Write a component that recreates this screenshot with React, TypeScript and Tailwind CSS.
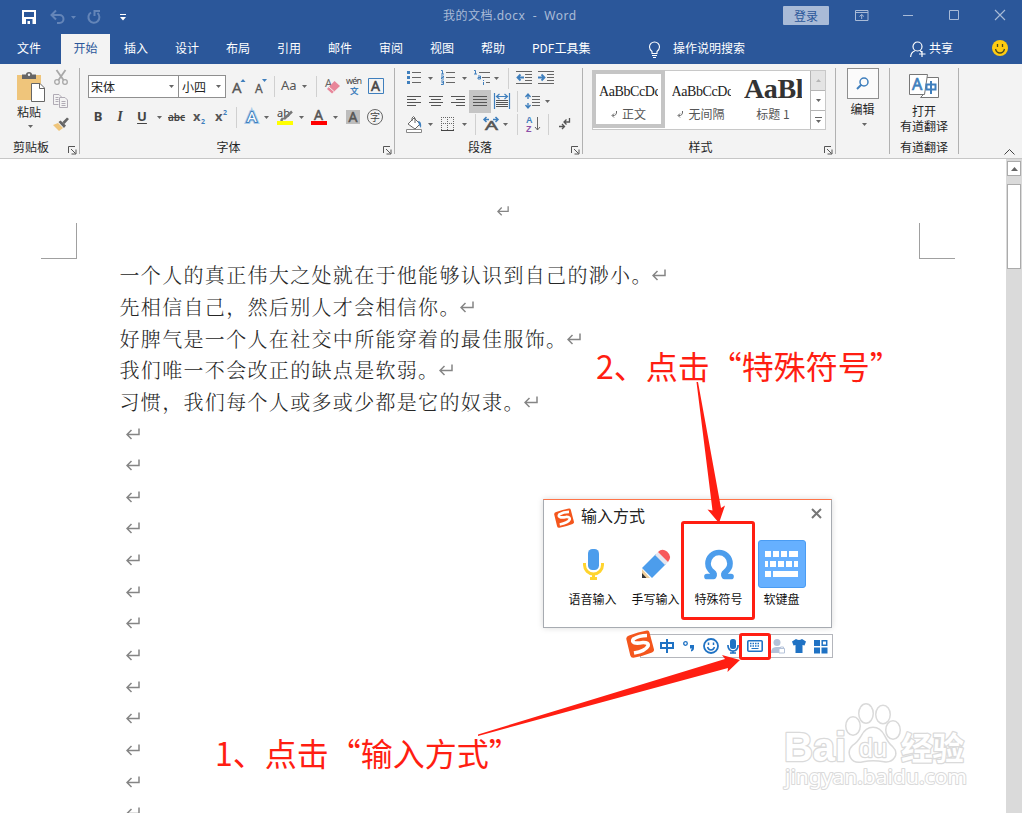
import React from 'react';
import { clsx } from 'clsx';

type IconProps = { w: number; h: number; className?: string; children: React.ReactNode };

function Icon({ w, h, className, children }: IconProps) {
  return (
    <svg width={w} height={h} viewBox={`0 0 ${w} ${h}`} fill="none" className={clsx('shrink-0 overflow-visible', className)}>
      {children}
    </svg>
  );
}

function Caret({ className }: { className?: string }) {
  return (
    <Icon w={5} h={3} className={clsx('text-[#666]', className)}>
      <path d="M0 0h5L2.5 3z" fill="currentColor" />
    </Icon>
  );
}

function Sep({ className }: { className?: string }) {
  return <div className={clsx('h-[21px] w-px shrink-0 bg-[#d0d0d0]', className)} />;
}

function Launcher() {
  return (
    <Icon w={9} h={9} className="ml-[6px] mt-[7px]">
      <path d="M.5 7V.5H7M3 3l4.500 4.500M8 3.500V8H3.500" stroke="#555" />
    </Icon>
  );
}

type GroupProps = { label?: string; launcher?: boolean; className?: string; children: React.ReactNode };

function Group({ label, launcher, className, children }: GroupProps) {
  return (
    <section className={clsx('flex h-[86px] shrink-0 flex-col border-r border-[#b1b1b1]', className)}>
      <div className="h-[71px]">{children}</div>
      <div className="flex h-[15px] text-xs leading-4">
        <span className="flex-1 text-center">{label}</span>
        {launcher && <div className="w-[17px]"><Launcher /></div>}
      </div>
    </section>
  );
}

function Return({ className, size = 14 }: { className?: string; size?: number }) {
  return (
    <svg width={size} height={size} viewBox="0 0 14 14" fill="none" className={clsx('shrink-0', className)}>
      <path d="M13 1.500v6H1M5.500 3L1 7.500 5.500 12" stroke="#858585" strokeWidth="1.500" />
    </svg>
  );
}

function Sogou({ size }: { size: number }) {
  return (
    <svg width={size} height={size} viewBox="0 0 28 28" className="shrink-0">
      <path d="M3 5.500Q12 2 21 .6Q23 .3 23.500 2.500L28 19.500Q28.300 21.500 26 22.500Q16 26.500 7.500 27.700Q5 28 4.300 25.500L.300 9Q0 6.500 3 5.500z" fill="#f4561d" />
      <path d="M21 5.500Q13 5.500 7.500 9Q5.500 11.500 8.500 12.800Q11 13.700 17 12.500Q23 12.300 22 16Q19.500 21 8 23" stroke="#fff" strokeWidth="3.700" fill="none" />
    </svg>
  );
}

function TitleBar() {
  return (
    <header className="flex h-[34px] items-center text-[#a9bbd7]">
      <Icon w={14} h={14} className="ml-[22px]">
        <path d="M0 0h14v14H0zM2 2v5h10V2zM4 9v5h1.500v-3H8v3h2.500V9z" fill="#fff" fillRule="evenodd" />
      </Icon>
      <Icon w={15} h={14} className="ml-[14px] text-[#6485b8]">
        <path d="M1 5h8.500a4 4 0 0 1 0 8H7" stroke="currentColor" strokeWidth="2" />
        <path d="M6 .5L1.500 5 6 9.500" stroke="currentColor" strokeWidth="2" />
      </Icon>
      <Icon w={5} h={3} className="ml-[6px]"><path d="M0 0h5L2.500 3z" fill="#6485b8" /></Icon>
      <Icon w={14} h={14} className="ml-[11px]">
        <path d="M4 2.500A5.500 5.500 0 1 0 10.500 3M7.500 6V1H13" stroke="#6485b8" strokeWidth="2" />
      </Icon>
      <Icon w={6} h={7} className="ml-[19px]">
        <path d="M0 3h6L3 6.500z" fill="#fff" />
        <path d="M0 .5h6" stroke="#fff" />
      </Icon>
      <h1 className="-mt-[3px] ml-[317px] w-[340px] whitespace-pre font-['Noto_Sans','Noto_Sans_CJK_SC',sans-serif] text-xs tracking-[0.500px]">
        我的文档.docx{'  -  '}Word
      </h1>
      <button className="-mt-[3px] h-[19px] w-[46px] rounded-[1px] bg-[#a9bbd7] text-xs leading-[18px] text-[#2b579a]">登录</button>
      <Icon w={14} h={11} className="-mt-1 ml-[26px]">
        <path d="M.5.5h12.500v10H.5zM.500 2.500H13M6.700 9V4.500M4.500 6.500l2.200-2 2.200 2" stroke="currentColor" />
      </Icon>
      <Icon w={10} h={10} className="-mt-1 ml-[34px]"><path d="M0 5.500h10" stroke="currentColor" /></Icon>
      <Icon w={10} h={10} className="-mt-1 ml-[36px]"><path d="M.5.5h9v9h-9z" stroke="currentColor" /></Icon>
      <Icon w={10} h={10} className="-mt-1 ml-[36px]"><path d="M0 0l10 10M10 0L0 10" stroke="currentColor" strokeWidth="1.100" /></Icon>
    </header>
  );
}

const tabs = ['插入', '设计', '布局', '引用', '邮件', '审阅', '视图', '帮助'];

function TabBar() {
  return (
    <nav className="flex h-[30px] items-center text-xs text-white">
      <span className="-mt-[3px] w-[61px] pl-[17px]">文件</span>
      <span className="flex h-full w-[49px] items-center justify-center bg-[#f3f3f3] pb-[3px] text-[#2b579a]">开始</span>
      {tabs.map((tab) => (
        <span key={tab} className="-mt-[3px] w-[51px] pl-[14px]">{tab}</span>
      ))}
      <span className="-mt-[3px] ml-[14px] w-[116px]">PDF工具集</span>
      <Icon w={13} h={17}>
        <path d="M4 12.500V10.500Q1.500 8.500 1.500 6a5 5 0 0 1 10 0q0 2.500-2.500 4.500v2zM4 14.500h5M5 16.500h3" stroke="#fff" strokeWidth="1.100" />
      </Icon>
      <span className="-mt-[3px] ml-[12px] w-[237px]">操作说明搜索</span>
      <Icon w={16} h={17}>
        <circle cx="7.500" cy="5.500" r="4.500" stroke="#fff" strokeWidth="1.200" />
        <path d="M.6 16q.5-5 4.500-6.200M10 9.500l1.500 1.500M12 10v6M9 13h6.500" stroke="#fff" strokeWidth="1.200" />
      </Icon>
      <span className="-mt-[3px] ml-[3px] w-[63px]">共享</span>
      <Icon w={16} h={16} className="-mt-0.5">
        <circle cx="8" cy="8" r="8" fill="#fc1" />
        <path d="M5.500 4v3M10.500 4v3M3.500 9q1 4 4.500 4t4.500-4" stroke="#4a4a20" strokeWidth="1.300" />
      </Icon>
    </nav>
  );
}

function ClipboardGroup() {
  return (
    <Group label="剪贴板" launcher className="w-20">
      <div className="flex">
        <div className="flex w-[36px] flex-col items-center pt-[4px] ml-[17px]">
          <Icon w={28} h={31} className="-ml-[8px]">
            <path d="M0 3h24v25H0z" fill="#efc57b" />
            <path d="M5 2.500h4Q9 0 12 0t3 2.500h4V7H5z" fill="#666" />
            <circle cx="12" cy="2.800" r="1.200" fill="#f3f3f3" />
            <path d="M14.500 11.500h8.500l4.500 4.500v13.500h-13z" fill="#fff" stroke="#666" />
            <path d="M22.500 11.500v5h5" stroke="#666" />
          </Icon>
          <span className="mt-px w-full whitespace-nowrap text-xs">粘贴</span>
          <Caret className="-ml-[9px] mt-[5px]" />
        </div>
        <div className="flex flex-col items-center gap-[10px] pt-[2px]">
          <Icon w={14} h={15}>
            <path d="M2.500 0L9.500 10M11.500 0L4.500 10" stroke="#a8a8a8" strokeWidth="1.800" />
            <circle cx="3" cy="12" r="2.300" stroke="#a8a8a8" strokeWidth="1.300" />
            <circle cx="11" cy="12" r="2.300" stroke="#a8a8a8" strokeWidth="1.300" />
          </Icon>
          <Icon w={16} h={14} className="-mt-px">
            <path d="M5.500 10.500h-5v-10H6L8.500 3M2.500 3.500h3M2.500 5.500h3M2.500 7.500h3" stroke="#b0abb5" />
            <path d="M6.500 3.500H12l2.500 2.500v7.500h-8zM8.500 7.500h4M8.500 9.500h4M8.500 11.500h4" stroke="#b0abb5" />
          </Icon>
          <Icon w={16} h={14} className="-mt-px">
            <path d="M0 8l5-2 5 5-4 3z" fill="#efc57b" />
            <path d="M5.500 5l2-1.500 5.500 5-2 2.500zM9.500 5L14 .5 16 2l-4.500 5z" fill="#666" />
          </Icon>
        </div>
      </div>
    </Group>
  );
}

function FontGroup() {
  return (
    <Group label="字体" launcher className="w-[315px]">
      <div className="flex items-center pl-2 pt-[7px]">
        <div className="flex h-[23px] w-[91px] items-center justify-between border border-[#8f8f8f] bg-white px-[2px] text-xs text-[#222]">
          宋体<Caret className="mr-[2px]" />
        </div>
        <div className="flex h-[23px] w-[47px] items-center justify-between border border-l-0 border-[#8f8f8f] bg-white px-[3px] text-xs text-[#222]">
          小四<Caret className="mr-px" />
        </div>
        <Icon w={16} h={16} className="-mt-[2px] ml-[5px]">
          <text x="1" y="15" fontSize="15" fontFamily="Noto Sans" fill="#555" stroke="#555" strokeWidth=".3">A</text>
          <path d="M9.500 4L12 1l2.500 3z" fill="#3f7fbd" />
        </Icon>
        <Icon w={15} h={16} className="-mt-[2px] ml-[7px]">
          <text x="1" y="15" fontSize="12" fontFamily="Noto Sans" fill="#555" stroke="#555" strokeWidth=".3">A</text>
          <path d="M8 1h5L10.500 4z" fill="#3f7fbd" />
        </Icon>
        <Sep className="ml-[5px]" />
        <span className="-mt-px ml-[6px] w-[17px] font-['Noto_Sans'] text-[13px] text-[#555]">Aa</span>
        <Caret className="ml-[4px]" />
        <Sep className="ml-[9px]" />
        <Icon w={17} h={16} className="-mt-px ml-[7px]">
          <text x="1" y="9" fontSize="11" fontFamily="Noto Sans" fill="#666">A</text>
          <path d="M3 11l7.500-8L16 8l-8 7.500z" fill="#e8869a" />
          <path d="M5 9l5 4.500" stroke="#f3f3f3" />
        </Icon>
        <Icon w={17} h={18} className="-mt-px ml-[5px]">
          <text x="0" y="6.500" fontSize="9" fontFamily="Noto Sans" fill="#444" textLength="16">wén</text>
          <text x="4" y="17" fontSize="8.500" fontWeight="bold" fontFamily="Noto Sans CJK SC" fill="#3f7fbd">文</text>
        </Icon>
        <Icon w={16} h={16} className="-mt-[2px] ml-[5px]">
          <path d="M.5.5h15v15H.5z" stroke="#3f7fbd" />
          <text x="3" y="13" fontSize="14" fontFamily="Noto Sans" fill="#444" stroke="#444" strokeWidth=".5">A</text>
        </Icon>
      </div>
      <div className="mt-[8px] flex h-[22px] items-center pl-[7px] text-[13px] text-[#444]">
        <span className="w-[22px] text-center font-['Noto_Sans'] font-bold">B</span>
        <span className="w-[22px] text-center font-['Liberation_Serif'] text-sm font-bold italic">I</span>
        <span className="w-[22px] text-center font-['Noto_Sans'] font-bold underline underline-offset-2">U</span>
        <Caret className="ml-[4px]" />
        <span className="ml-[6px] w-[18px] font-['Noto_Sans'] text-[10px] font-semibold line-through">abc</span>
        <Icon w={14} h={14} className="ml-[7px]">
          <text x="0" y="11" fontSize="13" fontWeight="bold" fontFamily="Noto Sans" fill="#555">x</text>
          <text x="8" y="14" fontSize="7" fontWeight="bold" fontFamily="Noto Sans" fill="#3f7fbd">2</text>
        </Icon>
        <Icon w={14} h={14} className="ml-[8px]">
          <text x="0" y="11" fontSize="13" fontWeight="bold" fontFamily="Noto Sans" fill="#555">x</text>
          <text x="8" y="5" fontSize="7" fontWeight="bold" fontFamily="Noto Sans" fill="#3f7fbd">2</text>
        </Icon>
        <Sep className="ml-[7px]" />
        <Icon w={16} h={16} className="ml-[7px]">
          <text x="3" y="13" fontSize="15" fontFamily="Noto Sans" fill="#fff" stroke="#a9cbea" strokeWidth="4">A</text>
          <text x="3" y="13" fontSize="15" fontFamily="Noto Sans" fill="#fff" stroke="#3f7fbd" strokeWidth="2" paintOrder="stroke">A</text>
        </Icon>
        <Caret className="ml-[4px]" />
        <Icon w={16} h={16} className="ml-[8px]">
          <text x="0" y="8" fontSize="11" fontFamily="Noto Sans" fill="#444">ab</text>
          <path d="M15 2.500L7 10M6 9l-2 3" stroke="#777" strokeWidth="2.500" />
          <path d="M0 12h16v4H0z" fill="#ff0" />
        </Icon>
        <Caret className="ml-[6px]" />
        <Icon w={16} h={16} className="ml-[7px]">
          <text x="3" y="11" fontSize="14" fontFamily="Noto Sans" fill="#555" stroke="#555" strokeWidth=".5">A</text>
          <path d="M0 12h16v4H0z" fill="#f00" />
        </Icon>
        <Caret className="ml-[6px]" />
        <Icon w={14} h={14} className="ml-[8px]">
          <path d="M0 0h14v14H0z" fill="#bdbdbd" />
          <text x="2.500" y="12" fontSize="14" fontFamily="Noto Sans" fill="#555" stroke="#555" strokeWidth=".5">A</text>
        </Icon>
        <Icon w={16} h={16} className="ml-[7px]">
          <circle cx="8" cy="8" r="7.500" stroke="#666" />
          <text x="3" y="12" fontSize="10" fontFamily="Noto Sans CJK SC" fill="#444">字</text>
        </Icon>
      </div>
    </Group>
  );
}

function ParagraphGroup() {
  return (
    <Group label="段落" launcher className="w-[188px]">
      <div className="flex h-[20px] items-center pl-[12px]">
        <Icon w={14} h={15} className="-mt-px">
          <path d="M5 2.500h9M5 7.500h9M5 12.500h9" stroke="#666" />
          <path d="M0 1h3v3H0zM0 6h3v3H0zM0 11h3v3H0z" fill="#3f7fbd" />
        </Icon>
        <Caret className="ml-[7px]" />
        <Icon w={14} h={15} className="-mt-px ml-[8px]">
          <path d="M5 2.500h9M5 7.500h9M5 12.500h9" stroke="#666" />
          <path d="M0 .5h1.500V4M0 4h3M0 6h2.500v1.500H.5V9H3M0 11h2.500v3.500H0M.5 12.700h2" stroke="#3f7fbd" />
        </Icon>
        <Caret className="ml-[7px]" />
        <Icon w={16} h={15} className="-mt-px ml-[7px]">
          <path d="M5 2.500h11M8 7.500h8M12 12.500h4" stroke="#666" />
          <path d="M0 .5h1.500V4M0 4h3M4 6h2.500v3H4V7.500h2M9.500 10v1M9.500 12v3" stroke="#3f7fbd" />
        </Icon>
        <Caret className="ml-[4px]" />
        <Sep className="ml-[9px]" />
        <Icon w={16} h={13} className="-mt-px ml-[7px]">
          <path d="M0 .5h16M9 3.500h7M9 6.500h7M9 9.500h7M0 12.500h16" stroke="#666" />
          <path d="M8 6.500H2M4.500 3.500l-3 3 3 3" stroke="#3f7fbd" strokeWidth="1.800" />
        </Icon>
        <Icon w={16} h={13} className="-mt-px ml-[6px]">
          <path d="M0 .5h16M9 3.500h7M9 6.500h7M9 9.500h7M0 12.500h16" stroke="#666" />
          <path d="M0 6.500h6M3.500 3.500l3 3-3 3" stroke="#3f7fbd" strokeWidth="1.800" />
        </Icon>
      </div>
      <div className="mt-[2px] flex h-[23px] items-center pl-[12px]">
        <Icon w={14} h={10} className="-mt-px"><path d="M0 .5h14M0 3.500h9M0 6.500h14M0 9.500h9" stroke="#555" /></Icon>
        <Icon w={14} h={10} className="-mt-px ml-[8px]"><path d="M0 .5h14M2 3.500h10M0 6.500h14M2 9.500h10" stroke="#555" /></Icon>
        <Icon w={14} h={10} className="-mt-px ml-[8px]"><path d="M0 .5h14M5 3.500h9M0 6.500h14M5 9.500h9" stroke="#555" /></Icon>
        <div className="ml-[4px] flex h-[23px] w-[22px] items-center justify-center bg-[#c5c5c5]">
          <Icon w={14} h={10} className="-mt-px"><path d="M0 .5h14M0 3.500h14M0 6.500h14M0 9.500h14" stroke="#555" /></Icon>
        </div>
        <Icon w={16} h={16} className="-mt-px ml-[3px]">
          <path d="M.5 0v16M15.500 0v16M3 3.500h10M5.500 1l-3 2.500 3 2.500M10.500 1l3 2.500-3 2.500" stroke="#3f7fbd" strokeWidth="1.200" />
          <path d="M2 7.500h12M2 9.500h12M2 11.500h12M2 13.500h12" stroke="#555" />
        </Icon>
        <Sep className="ml-[7px]" />
        <Icon w={16} h={16} className="-mt-px ml-[7px]">
          <path d="M3 1v5M3 10v5M.5 4L3 1l2.500 3M.5 12L3 15l2.500-3" stroke="#3f7fbd" strokeWidth="1.400" />
          <path d="M7 3.500h8M7 6.500h8M7 9.500h8M7 12.500h8" stroke="#666" />
        </Icon>
        <Caret className="ml-[4px]" />
      </div>
      <div className="flex h-[22px] items-center pl-[11px]">
        <Icon w={17} h={17}>
          <path d="M2 8l6-6 6 6-5 5-7-5zM6 5V2q1.500-3 3 0v5" stroke="#666" fill="#fff" />
          <path d="M12 5q4 0 3 7l-2-3z" fill="#3f7fbd" />
          <path d="M.5 13.500h15v3H.500z" fill="#fff" stroke="#888" />
        </Icon>
        <Caret className="ml-[5px]" />
        <Icon w={14} h={14} className="-mt-px ml-[8px]">
          <path d="M0 .5h13M.5 0v13M6.500 0v13M12.500 0v13M0 6.500h13" stroke="#666" strokeDasharray="1 1" />
          <path d="M0 13.500h13" stroke="#444" />
        </Icon>
        <Caret className="ml-[7px]" />
        <Sep className="ml-[8px]" />
        <Icon w={16} h={16} className="ml-[7px]">
          <text x="2" y="14" fontSize="13" fontFamily="Noto Sans" fill="#555" stroke="#555" strokeWidth=".5" textLength="13" lengthAdjust="spacingAndGlyphs">A</text>
          <path d="M6 3.500H1M3.500 1L1 3.500 3.500 6M10 3.500h5M12.500 1L15 3.500 12.500 6" stroke="#3f7fbd" strokeWidth="1.500" />
        </Icon>
        <Caret className="ml-[4px]" />
        <Sep className="ml-[9px]" />
        <Icon w={15} h={16} className="-mt-px ml-[8px]">
          <text x="0" y="7" fontSize="9" fontWeight="bold" fontFamily="Liberation Sans" fill="#3f7fbd">A</text>
          <text x="0" y="16" fontSize="9" fontWeight="bold" fontFamily="Liberation Sans" fill="#8c50a8">Z</text>
          <path d="M11.500 1v13M9 11l2.500 3 2.500-3" stroke="#666" />
        </Icon>
        <Sep className="ml-[7px]" />
        <Icon w={13} h={14} className="ml-[9px]">
          <path d="M11.500 1v4H6M8.500 2.500L6 5l2.500 2.500M1 9.500h5M4 7l2.500 2.500L4 12" stroke="#555" strokeWidth="1.300" />
        </Icon>
      </div>
    </Group>
  );
}

function SmallReturn() {
  return (
    <Icon w={6} h={7}>
      <path d="M5.500 0q.5 5-4 4.500M3 2.500L1 4.500l2 2" stroke="#666" />
    </Icon>
  );
}

function StylesGroup() {
  return (
    <Group label="样式" launcher className="w-[253px]">
      <div className="ml-[9px] mt-[2px] flex h-[60px] w-[234px] border border-[#c8c8c8] bg-white text-[#555]">
        <div className="-ml-px -mt-px flex h-[58px] w-[73px] shrink-0 flex-col items-center border-[4px] border-[#c5c5c5] pt-[7px]">
          <span className="h-[22px] w-[59px] overflow-hidden whitespace-nowrap font-['Liberation_Serif'] text-[14px] leading-[22px] tracking-[-0.400px] text-[#222]">AaBbCcDc</span>
          <span className="mt-[3px] flex items-center gap-[5px] text-xs leading-4"><SmallReturn />正文</span>
        </div>
        <div className="flex w-[72px] flex-col items-center pt-[10px]">
          <span className="h-[22px] w-[59px] overflow-hidden whitespace-nowrap font-['Liberation_Serif'] text-[14px] leading-[22px] tracking-[-0.400px] text-[#222]">AaBbCcDc</span>
          <span className="mt-[3px] flex items-center gap-[5px] text-xs leading-4"><SmallReturn />无间隔</span>
        </div>
        <div className="flex w-[72px] flex-col items-center pt-[2px]">
          <span className="h-[32px] w-[58px] overflow-hidden whitespace-nowrap font-['Liberation_Serif'] text-[28px] font-bold leading-[32px] tracking-[-0.400px] text-[#333]">AaBl</span>
          <span className="mt-px text-xs leading-4">标题 1</span>
        </div>
        <div className="ml-auto flex w-[15px] flex-col divide-y divide-[#b5b5b5] border-l border-[#b5b5b5]">
          <div className="flex h-[20px] items-center justify-center bg-[#e4e4e4]"><Caret className="rotate-180 !text-[#b5b5b5]" /></div>
          <div className="flex h-[20px] items-center justify-center"><Caret /></div>
          <div className="flex flex-1 flex-col items-center justify-center gap-[2px]"><div className="h-px w-[7px] bg-[#666]" /><Caret /></div>
        </div>
      </div>
    </Group>
  );
}

function Ribbon() {
  return (
    <div className="flex h-[95px] border-b border-[#c6c6c6] bg-[#f3f3f3] pt-1 text-[#262626]">
      <ClipboardGroup />
      <FontGroup />
      <ParagraphGroup />
      <StylesGroup />
      <Group className="w-[54px]">
        <div className="flex flex-col items-center">
          <div className="flex h-[31px] w-[32px] items-center justify-center border border-[#8f8f8f] bg-[#fbfbfb]">
            <Icon w={13} h={13}>
              <circle cx="8" cy="5" r="4" stroke="#3f7fbd" strokeWidth="1.500" />
              <path d="M5.500 7.500L1 12" stroke="#3f7fbd" strokeWidth="2" />
            </Icon>
          </div>
          <span className="mt-[2px] text-xs">编辑</span>
          <Caret className="ml-[3px] mt-[6px]" />
        </div>
      </Group>
      <Group label="有道翻译" className="w-[69px]">
        <div className="flex flex-col items-center pt-[5px] text-xs leading-[15px]">
          <Icon w={30} h={26}>
            <path d="M15.500 4.500h14v20h-18l4-4z" fill="#fff" stroke="#777" />
            <path d="M.5 1.500h18l-3 20H.5z" fill="#fff" stroke="#777" />
            <text x="3" y="17" fontSize="16" fontFamily="Noto Sans" fill="#3f7fbd" stroke="#3f7fbd" strokeWidth=".7">A</text>
            <path d="M17.500 11.500h9v5h-9zM22 8v13" stroke="#3f7fbd" strokeWidth="2" />
          </Icon>
          <span className="mt-[4px]">打开</span>
          <span>有道翻译</span>
        </div>
      </Group>
      <Icon w={11} h={6} className="ml-auto mr-[7px] mt-[81px]"><path d="M.5 5.500l5-5 5 5" stroke="#444" /></Icon>
    </div>
  );
}

const lines = [
  '一个人的真正伟大之处就在于他能够认识到自己的渺小。',
  '先相信自己，然后别人才会相信你。',
  '好脾气是一个人在社交中所能穿着的最佳服饰。',
  '我们唯一不会改正的缺点是软弱。',
  '习惯，我们每个人或多或少都是它的奴隶。',
];

function Document() {
  return (
    <main className="min-w-0 flex-1 overflow-hidden bg-white">
      <div className="flex h-[64px] justify-center pt-[46px]"><Return size={12} /></div>
      <div className="flex h-[36px] justify-between pl-[41px] pr-[51px]">
        <div className="w-[36px] border-b border-r border-[#a0a0a0]" />
        <div className="w-[36px] border-b border-l border-[#a0a0a0]" />
      </div>
      <div className="pl-[120px] pt-[0.500px]">
        {lines.map((line, i) => (
          <p key={line} className="-ml-[0.500px] flex h-[31.650px] items-center whitespace-nowrap font-['Noto_Serif_CJK_SC','Noto_Sans_CJK_SC',serif] text-[20px] font-light tracking-[1.330px] text-[#262626]">
            {line}<Return className={i === 0 ? '-ml-px' : 'ml-[-0.500px]'} />
          </p>
        ))}
        {Array.from({ length: 13 }, (_, i) => (
          <div key={i} className="flex h-[31.650px] items-center pl-[6px]"><Return /></div>
        ))}
      </div>
    </main>
  );
}

function Scrollbar() {
  return (
    <aside className="flex w-4 shrink-0 flex-col bg-[#dadada] pl-px pr-px pt-[2px]">
      <div className="flex h-[15px] items-center justify-center border border-[#ababab] bg-white"><Icon w={7} h={4}><path d="M0 4h7L3.500 0z" fill="#666" /></Icon></div>
      <div className="mt-[8px] h-[85px] border border-[#ababab] bg-white" />
    </aside>
  );
}

function Mic() {
  return (
    <Icon w={21} h={31} className="ml-px">
      <path d="M1.500 14v2a9 9 0 0 0 18 0v-2" stroke="#ffd42e" strokeWidth="3" />
      <path d="M10.500 24v4M7 29.500h7" stroke="#ffd42e" strokeWidth="3" />
      <rect x="5" width="11" height="21" rx="4.500" fill="#4c9dec" />
    </Icon>
  );
}

function Pencil() {
  return (
    <Icon w={30} h={30}>
      <path d="M1 29V20l8 9z" fill="#efcf9d" />
      <path d="M1 29v-5l4.500 5z" fill="#333" />
      <path d="M1 19L15 5l10 10L11 29z" fill="#4c9dec" />
      <path d="M14 6l3-3 10 10-3 3z" fill="#e6e6ee" />
      <path d="M17 3q4-4 9-.5Q31.500 7.500 27 13z" fill="#f7585a" />
    </Icon>
  );
}

function Omega() {
  return (
    <Icon w={30} h={30} className="mt-[2px]">
      <path d="M3 26.500h6.500Q11 24 8.500 22 4 18.500 4 13.500a11 11 0 0 1 22 0q0 5-4.500 8.500Q19 24 20.500 26.500H27" stroke="#4c9dec" strokeWidth="5.700" strokeLinecap="round" strokeLinejoin="round" />
    </Icon>
  );
}

function SoftKeyboard() {
  return (
    <div className="flex h-12 w-12 items-center justify-center rounded-[3px] border border-[#4a9cf3] bg-[#66b0ff]">
      <Icon w={33} h={27}>
        <path d="M0 0h6v6H0zM8 0h6v6H8zM16 0h6v6h-6zM24 0h9v6h-9zM0 10h3v6H0zM5 10h6v6H5zM13 10h6v6h-6zM21 10h6v6h-6zM29 10h4v6h-4zM0 20h6v6H0zM8 20h25v6H8z" fill="#fff" />
      </Icon>
    </div>
  );
}

const methods = [
  { label: '语音输入', icon: <Mic /> },
  { label: '手写输入', icon: <Pencil /> },
  { label: '特殊符号', icon: <Omega /> },
  { label: '软键盘', icon: <SoftKeyboard /> },
];

function InputPopup() {
  return (
    <div className="absolute left-[543px] top-[499px] h-[129px] w-[289px] border border-[#a7abb1] border-t-[#ff7448] bg-white shadow-[0_0_6px_rgba(0,0,0,0.15)]">
      <div className="flex h-[35px] items-center pl-[10px] pr-[9px]">
        <Sogou size={20} />
        <span className="-mt-[5px] ml-[7px] text-base text-[#222]">输入方式</span>
        <Icon w={11} h={11} className="-mt-2 ml-auto"><path d="M1 1l9 9M10 1l-9 9" stroke="#777" strokeWidth="2" /></Icon>
      </div>
      <div className="flex pl-[17px] pt-[5px]">
        {methods.map((method) => (
          <div key={method.label} className="flex w-[63px] shrink-0 flex-col items-center">
            <div className="flex h-[48px] items-center">{method.icon}</div>
            <span className="mt-[2px] text-xs leading-[18px] text-[#111]">{method.label}</span>
          </div>
        ))}
      </div>
    </div>
  );
}

function ImeBar() {
  return (
    <div className="absolute left-[626px] top-[631px] flex h-[27px] w-[207px] items-center">
      <div className="absolute bottom-0 left-[14px] right-0 top-[3px] border border-[#b4b6bc] bg-white" />
      <div className="relative flex items-center pt-[3px] text-[#1f72c4]">
        <div className="-mt-[4px]"><Sogou size={28} /></div>
        <Icon w={14} h={14} className="ml-[6px]"><path d="M1 4h12v5H1zM7 0v14" stroke="currentColor" strokeWidth="2" /></Icon>
        <Icon w={12} h={14} className="ml-[9px]">
          <circle cx="2.500" cy="4.500" r="1.800" stroke="currentColor" strokeWidth="1.300" />
          <path d="M7 6h4v3q0 2.500-3 3.500V11L9 9.500H7z" fill="currentColor" />
        </Icon>
        <Icon w={16} h={16} className="ml-[8px]">
          <circle cx="8" cy="8" r="7" stroke="currentColor" strokeWidth="1.800" />
          <path d="M5.500 4.500v2.500M10.500 4.500v2.500M4.500 9q1 3 3.500 3t3.500-3" stroke="currentColor" strokeWidth="1.500" />
        </Icon>
        <Icon w={12} h={15} className="ml-[8px]">
          <rect x="3" width="6" height="10" rx="2.500" fill="currentColor" />
          <path d="M1 6v1a5 5 0 0 0 10 0V6M6 12v2M3 14h6" stroke="currentColor" strokeWidth="1.700" />
        </Icon>
        <Icon w={16} h={12} className="ml-[8px]">
          <rect x=".8" y=".8" width="14.400" height="10.400" rx="1" stroke="currentColor" strokeWidth="1.600" />
          <path d="M3 3.500h10M3 6h10" stroke="currentColor" strokeWidth="1.500" strokeDasharray="1.500 1" />
          <path d="M4.500 8.500h7" stroke="currentColor" />
        </Icon>
        <Icon w={15} h={15} className="ml-[8px]">
          <circle cx="6" cy="3.500" r="3.500" fill="#b4c2d9" />
          <path d="M0 14q0-6 5-6h4v6z" fill="#b4c2d9" />
          <path d="M8 9.500h5.500V14H8zM9.500 9V8h3v1" fill="#fff" stroke="#b4c2d9" />
        </Icon>
        <Icon w={14} h={14} className="ml-[6px]"><path d="M4 0q3 2 6 0l4 2.500-1.500 4-2-.5v8h-7V6l-2 .5L0 2.500z" fill="currentColor" /></Icon>
        <Icon w={13} h={13} className="ml-[8px]">
          <path d="M0 0h6v6H0zM0 7.500h6v6H0zM7.500 7.500h6v6h-6z" fill="currentColor" />
          <path d="M8.200.8h4.500v4.500H8.200z" stroke="currentColor" strokeWidth="1.500" />
        </Icon>
      </div>
    </div>
  );
}

function Watermark() {
  return (
    <svg width="190" height="96" viewBox="0 0 190 96" className="absolute left-[780px] top-[700px] overflow-visible" fill="#fff" stroke="#dadada" strokeWidth="2.600" strokeLinejoin="round" paintOrder="stroke">
      <text x="4" y="61" fontSize="41" fontWeight="bold" fontFamily="Liberation Sans" textLength="62" lengthAdjust="spacingAndGlyphs">Bai</text>
      <g strokeWidth="3">
        <ellipse cx="73" cy="26" rx="6.500" ry="8.500" />
        <ellipse cx="86" cy="13.500" rx="6.500" ry="9" />
        <ellipse cx="103" cy="14.500" rx="6.500" ry="8.500" />
        <ellipse cx="113" cy="30" rx="6.500" ry="8.500" />
        <path d="M93 28q7 0 11 8t8 11q5 5 2 10t-10 4q-11-2-21 0-9 2-12-4t2-11q5-3 9-10 4-8 11-8z" />
      </g>
      <text x="79" y="57" fontSize="26" fontFamily="Liberation Sans" textLength="28" lengthAdjust="spacingAndGlyphs">du</text>
      <text x="121" y="60" fontSize="32" fontWeight="bold" fontFamily="Noto Sans CJK SC" textLength="63" lengthAdjust="spacingAndGlyphs">经验</text>
      <text x="5" y="84" fontSize="20" fontFamily="Noto Sans" strokeWidth="2" textLength="182" lengthAdjust="spacingAndGlyphs">jingyan.baidu.com</text>
    </svg>
  );
}

function Annotations() {
  return (
    <>
      <span className="absolute left-[596px] top-[345px] whitespace-nowrap text-[32px] leading-10 text-[#ff1e12]">2、点击“特殊符号”</span>
      <span className="absolute left-[215px] top-[732px] whitespace-nowrap text-[32px] leading-10 text-[#ff1e12]">1、点击“输入方式”</span>
      <div className="absolute left-[681px] top-[521px] h-[99px] w-[74px] rounded-[3px] border-[3px] border-[#ff1e12]" />
      <div className="absolute left-[739px] top-[633px] h-[27px] w-[32px] rounded-[3px] border-[3px] border-[#ff1e12]" />
      <svg width="1022" height="813" viewBox="0 0 1022 813" className="absolute left-0 top-0" fill="#ff1e12">
        <path d="M696.500 382h1.500L721 508l4-2.500-6 17.500-11.500-13.500 5 1z" />
        <path d="M478 734.500L725 659l-3-4 18 5-12.500 12 .5-4L478 736z" />
      </svg>
    </>
  );
}

export default function App() {
  return (
    <div lang="zh-CN" className="relative flex h-[813px] w-[1022px] flex-col overflow-hidden bg-[#2b579a] font-['Noto_Sans_CJK_SC',sans-serif]">
      <TitleBar />
      <TabBar />
      <Ribbon />
      <div className="flex min-h-0 flex-1">
        <Document />
        <Scrollbar />
      </div>
      <Watermark />
      <InputPopup />
      <ImeBar />
      <Annotations />
    </div>
  );
}
